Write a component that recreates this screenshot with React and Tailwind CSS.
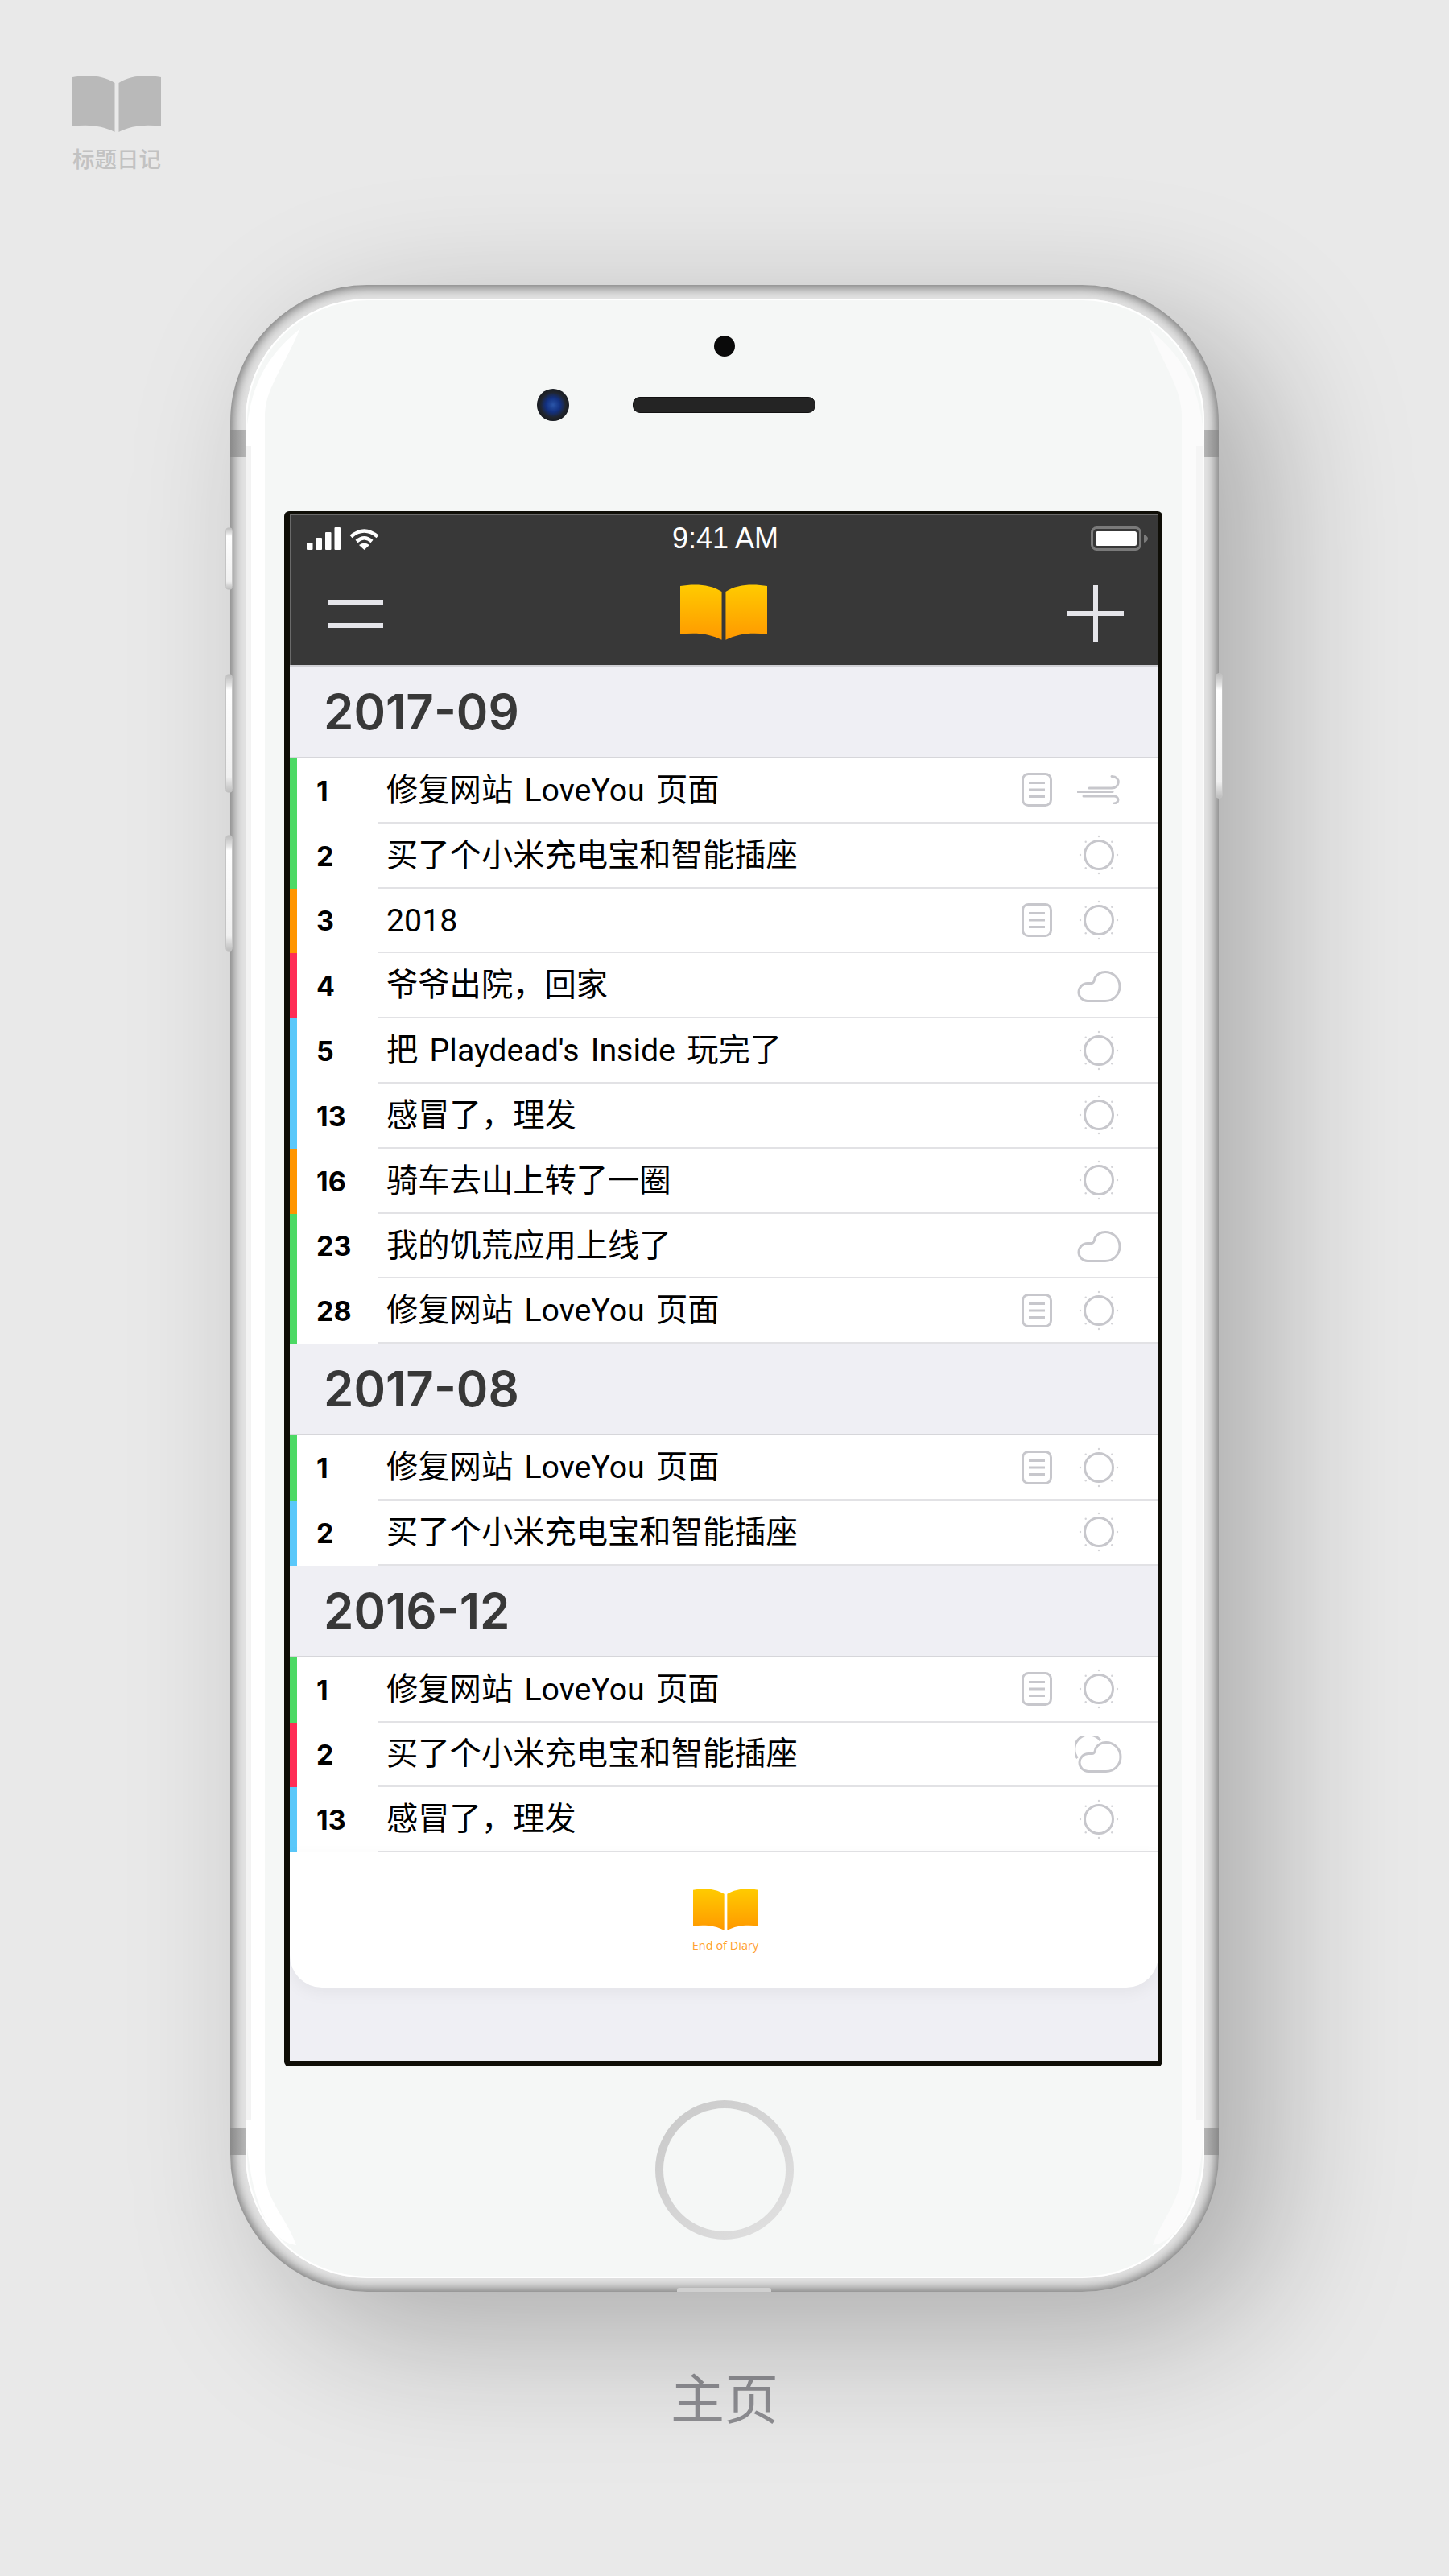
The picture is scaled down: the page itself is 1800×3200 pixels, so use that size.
import React from 'react';

const GREEN = 'bg-[#4cd964]';
const ORANGE = 'bg-[#ff9500]';
const PINK = 'bg-[#ff2d55]';
const BLUE = 'bg-[#5ac8fa]';

const LOVEYOU = '修复网站 LoveYou 页面';
const CHARGER = '买了个小米充电宝和智能插座';
const HAIRCUT = '感冒了\uFF0C理发';

const sections = [
  {
    month: '2017-09',
    rows: [
      { day: 1, text: LOVEYOU, bar: GREEN, note: true, weather: 'wind' },
      { day: 2, text: CHARGER, bar: GREEN, weather: 'sun' },
      { day: 3, text: '2018', bar: ORANGE, note: true, weather: 'sun' },
      { day: 4, text: '爷爷出院\uFF0C回家', bar: PINK, weather: 'cloud' },
      { day: 5, text: "把 Playdead's Inside 玩完了", bar: BLUE, weather: 'sun' },
      { day: 13, text: HAIRCUT, bar: BLUE, weather: 'sun' },
      { day: 16, text: '骑车去山上转了一圈', bar: ORANGE, weather: 'sun' },
      { day: 23, text: '我的饥荒应用上线了', bar: GREEN, weather: 'cloud' },
      { day: 28, text: LOVEYOU, bar: GREEN, note: true, weather: 'sun' },
    ],
  },
  {
    month: '2017-08',
    rows: [
      { day: 1, text: LOVEYOU, bar: GREEN, note: true, weather: 'sun' },
      { day: 2, text: CHARGER, bar: BLUE, weather: 'sun' },
    ],
  },
  {
    month: '2016-12',
    rows: [
      { day: 1, text: LOVEYOU, bar: GREEN, note: true, weather: 'sun' },
      { day: 2, text: CHARGER, bar: PINK, weather: 'partly' },
      { day: 13, text: HAIRCUT, bar: BLUE, weather: 'sun' },
    ],
  },
];

function Book({ className, fill }) {
  return (
    <svg viewBox="0 0 110 70" className={className}>
      <defs>
        <linearGradient id="bookGold" x1="0" y1="0" x2="0" y2="1">
          <stop offset="0" stopColor="#ffcb00" />
          <stop offset="1" stopColor="#ff9800" />
        </linearGradient>
      </defs>
      <path d="M0 2C16 -1 38 -1 52.500 9V70C38 62 18 60 0 63Z" fill={fill} />
      <path d="M110 2C94 -1 72 -1 57.500 9V70C72 62 92 60 110 63Z" fill={fill} />
    </svg>
  );
}

function NoteIcon() {
  return (
    <svg viewBox="0 0 38 42" className="w-[38px] h-[42px]" fill="none" stroke="#c7c7cc" strokeWidth="3">
      <rect x="1.500" y="1.500" width="35" height="39" rx="7" />
      <path d="M9 12.500H29M9 21H29M9 29.500H29" />
    </svg>
  );
}

function SunIcon() {
  const dots = [0, 45, 90, 135, 180, 225, 270, 315];
  return (
    <svg viewBox="0 0 50 50" className="w-[50px] h-[50px]">
      <circle cx="25" cy="25" r="17.500" fill="none" stroke="#c7c7cc" strokeWidth="3" />
      {dots.map((deg) => (
        <circle
          key={deg}
          cx={25 + 23 * Math.cos((deg * Math.PI) / 180)}
          cy={25 + 23 * Math.sin((deg * Math.PI) / 180)}
          r="1.200"
          fill="#d4d4d8"
        />
      ))}
    </svg>
  );
}

function WindIcon() {
  return (
    <svg viewBox="0 0 54 36" className="w-[54px] h-[36px]" fill="none" stroke="#c7c7cc" strokeWidth="3" strokeLinecap="round">
      <path d="M15 16H43C53 16 55 2 43 1.500" />
      <path d="M1 20.500H44" />
      <path d="M8 26H46C52 26 53 34 46 35" />
    </svg>
  );
}

function CloudIcon() {
  return (
    <svg viewBox="3 7 54 39" className="w-[54px] h-[39px] mt-[4px]" fill="none" stroke="#c7c7cc" strokeWidth="3">
      <path d="M16 44.500H38A18 18 0 0 0 38 8.500C32 8.500 27 12 25 16C24.500 19 24 22.500 21 22.500H16A11 11 0 0 0 16 44.500Z" />
    </svg>
  );
}

function PartlyIcon() {
  return (
    <svg viewBox="0 0 58 47" className="w-[58px] h-[47px] mt-[2px]" fill="none" stroke="#c7c7cc" strokeWidth="3">
      <path d="M16 44.500H38A18 18 0 0 0 38 8.500C32 8.500 27 12 25 16C24.500 19 24 22.500 21 22.500H16A11 11 0 0 0 16 44.500Z" />
      <path d="M31 6A18 18 0 0 0 2.500 28" />
    </svg>
  );
}

const weatherIcons = { sun: SunIcon, wind: WindIcon, cloud: CloudIcon, partly: PartlyIcon };

function Row({ row }) {
  const Weather = weatherIcons[row.weather];
  return (
    <div className="flex h-[80.8px] bg-white">
      <div className={`w-[9px] ${row.bar}`} />
      <div className="w-[101px] pl-[24px] flex items-center text-[34px] font-bold text-black">{row.day}</div>
      <div className="flex-1 flex items-center border-b-2 border-[#e2e2e5] pl-[10px] pr-[34px]">
        <span className="flex-1 pt-[2px] text-[39.3px] [word-spacing:4.5px] text-black whitespace-nowrap font-['Roboto','Noto_Sans_CJK_SC',sans-serif]">{row.text}</span>
        {row.note && <NoteIcon />}
        <div className="w-[80px] ml-[18px] flex justify-center">
          <Weather />
        </div>
      </div>
    </div>
  );
}

function Section({ section }) {
  return (
    <section>
      <div className="h-[114px] flex items-center pl-[42px] bg-[#efeff4] border-b-2 border-[#d6d6da] text-[60px] font-semibold text-[#383838]">
        {section.month}
      </div>
      {section.rows.map((row, i) => (
        <Row key={i} row={row} />
      ))}
    </section>
  );
}

function StatusBar() {
  return (
    <div className="h-[56px] flex items-center pl-[21px] pr-[13px] pt-[3px] text-white">
      <div className="flex-1 flex items-end gap-[11px]">
        <svg viewBox="0 0 42 28" className="w-[42px] h-[28px]" fill="#fff">
          <rect x="0" y="19" width="7.500" height="9" rx="1" />
          <rect x="11.500" y="13" width="7.500" height="15" rx="1" />
          <rect x="23" y="6" width="7.500" height="22" rx="1" />
          <rect x="34.500" y="0" width="7.500" height="28" rx="1" />
        </svg>
        <svg viewBox="0 0 37 27" className="w-[37px] h-[27px]">
          <path d="M2 10.500Q18.500 -3.500 35 10.500" fill="none" stroke="#fff" strokeWidth="4.500" />
          <path d="M9 16.500Q18.500 8 28 16.500" fill="none" stroke="#fff" strokeWidth="4.500" />
          <path d="M18.500 27L12 21Q18.500 16.500 25 21Z" fill="#fff" />
        </svg>
      </div>
      <span className="-ml-[5px] font-['Liberation_Sans',sans-serif] text-[36px] leading-none">9:41 AM</span>
      <div className="flex-1 flex justify-end">
        <svg viewBox="0 0 71 30" className="w-[71px] h-[30px]">
          <rect x="1.500" y="1.500" width="60" height="27" rx="6" fill="none" stroke="#7a7a7a" strokeWidth="3" />
          <rect x="6" y="6" width="51" height="18" rx="2.500" fill="#fff" />
          <path d="M66 10C69 11 71 13 71 15C71 17 69 19 66 20Z" fill="#7a7a7a" />
        </svg>
      </div>
    </div>
  );
}

function NavBar() {
  return (
    <div className="flex items-center justify-between h-[131px] pl-[47px] pr-[43px] pt-[3px]">
      <div className="flex flex-col gap-[23px]">
        <div className="w-[69px] h-[6px] bg-[#e5e5ea]" />
        <div className="w-[69px] h-[6px] bg-[#e5e5ea]" />
      </div>
      <Book className="w-[108px] h-[73px] -mt-[4px] -ml-[4px]" fill="url(#bookGold)" />
      <svg viewBox="0 0 70 70" className="w-[70px] h-[70px]" fill="#e5e5ea">
        <rect x="0" y="32" width="70" height="6" />
        <rect x="32" y="0" width="6" height="70" />
      </svg>
    </div>
  );
}

function Screen() {
  return (
    <div className="ml-[48px] w-[1091px] h-[1932px] bg-[#0f0e07] rounded-[6px] pt-[4px] pb-[7px] pl-[7px] pr-[5px]">
      <div className="h-full bg-[#efeff4] flex flex-col overflow-hidden">
        <header className="bg-[#383838] border-b-2 border-[#d0d0d5] shadow-[inset_0_1px_0_#6a6a6a,inset_1px_0_0_#6a6a6a,inset_-1px_0_0_#6a6a6a]">
          <StatusBar />
          <NavBar />
        </header>
        {sections.map((section) => (
          <Section key={section.month} section={section} />
        ))}
        <div className="h-[168px] bg-white rounded-b-[40px] shadow-[0_6px_20px_rgba(0,0,0,0.05)] flex flex-col items-center pt-[44px]">
          <Book className="w-[81px] h-[54px] ml-[3px]" fill="url(#bookGold)" />
          <span className="mt-[8px] ml-[3px] text-[14.5px] leading-[20px] text-[#ffa030] font-['Open_Sans',sans-serif]">End of Diary</span>
        </div>
      </div>
    </div>
  );
}

function SideButton({ className }) {
  return (
    <div className={`absolute w-[9px] rounded-[5px] border border-[#c4c4c4] bg-[linear-gradient(to_bottom,#bdbdbd_0%,#e4e4e4_9%,#ffffff_13%,#f0f0f0_87%,#e0e0e0_91%,#bdbdbd_100%)] ${className}`} />
  );
}

function Phone() {
  return (
    <div className="relative ml-[286px] w-[1228px] h-[2493px]">
      <div className="relative h-full rounded-[170px] bg-[#e2e2e2] pt-[17px] pb-[17px] pl-[19px] pr-[18px] shadow-[inset_0_0_14px_3px_#707070,60px_50px_180px_rgba(0,0,0,0.27)]">
        <div className="relative h-full rounded-[152px] bg-[#f5f7f6] shadow-[inset_0_0_0_2px_#ffffff]">
          <div className="h-[264px] pt-[46px] flex flex-col">
            <div className="mx-auto -translate-x-[1px] w-[26px] h-[26px] rounded-full bg-[#0a0a0a]" />
            <div className="mt-[40px] pl-[362px] flex items-center">
              <div className="w-[40px] h-[40px] rounded-full bg-[radial-gradient(circle,#2a55a8_0%,#123080_32%,#20252e_55%,#0b0b0b_100%)]" />
              <div className="ml-[79px] w-[227px] h-[20px] rounded-[9px] bg-[#242424] border border-[#111]" />
            </div>
          </div>
          <Screen />
          <div className="mt-[42px] mx-auto -translate-x-[1px] w-[172px] h-[173px] p-[10px] rounded-full bg-[linear-gradient(135deg,#c8c8c8,#e2e2e2)]">
            <div className="w-full h-full rounded-full bg-[#f5f7f6]" />
          </div>
        </div>
      </div>

      {/* side buttons */}
      <SideButton className="left-[-6px] top-[301px] h-[78px]" />
      <SideButton className="left-[-6px] top-[483px] h-[148px]" />
      <SideButton className="left-[-6px] top-[683px] h-[145px]" />
      <SideButton className="right-[-5px] top-[482px] h-[156px]" />

      {/* antenna bands */}
      <div className="absolute left-0 top-[180px] w-[19px] h-[34px] bg-[linear-gradient(to_right,#8a8a8a,#b5b5b5)]" />
      <div className="absolute right-0 top-[180px] w-[18px] h-[34px] bg-[linear-gradient(to_left,#8a8a8a,#b5b5b5)]" />
      <div className="absolute left-0 top-[2289px] w-[19px] h-[34px] bg-[linear-gradient(to_right,#8a8a8a,#b5b5b5)]" />
      <div className="absolute right-0 top-[2289px] w-[18px] h-[34px] bg-[linear-gradient(to_left,#8a8a8a,#b5b5b5)]" />
      {/* charging port edge */}
      <div className="absolute left-[555px] bottom-0 w-[117px] h-[5px] rounded-t-[3px] bg-[#d0d0d0]" />

      {/* glass highlight */}
      <svg viewBox="0 0 1228 2493" className="absolute inset-0 w-full h-full pointer-events-none">
        <path d="M87 54C50 85 22 120 19 200V2280C22 2370 45 2430 82 2435C70 2400 43 2380 43 2339V163C43 130 65 105 87 54Z" fill="#ffffff" />
        <path d="M1141 54C1178 85 1207 120 1210 200V2280C1207 2370 1183 2430 1146 2435C1158 2400 1182 2380 1182 2339V163C1182 130 1163 105 1141 54Z" fill="#fbfbfb" />
        <rect x="20" y="200" width="6" height="2080" fill="#f3f3f3" />
        <rect x="1200" y="200" width="9" height="2080" fill="#f5f5f5" />
      </svg>
    </div>
  );
}

export default function App() {
  return (
    <div className="relative w-[1800px] h-[3200px] overflow-hidden bg-[#e9e9e9] font-['Inter','Noto_Sans_CJK_SC',sans-serif]">
      <div className="pt-[94px] pl-[90px] h-[354px]">
        <svg viewBox="0 0 110 70" className="w-[110px] h-[70px]" fill="#b9b9b9">
          <path d="M0 2C16 -1 38 -1 52.500 9V70C38 62 18 60 0 63Z" />
          <path d="M110 2C94 -1 72 -1 57.500 9V70C72 62 92 60 110 63Z" />
        </svg>
        <div className="mt-[18px] text-[27.5px] leading-[32px] font-medium text-[#c2c2c2] whitespace-nowrap">标题日记</div>
      </div>
      <Phone />
      <div className="mt-[96px] text-center text-[67px] leading-[76px] text-[#8e8e93]">主页</div>
    </div>
  );
}
